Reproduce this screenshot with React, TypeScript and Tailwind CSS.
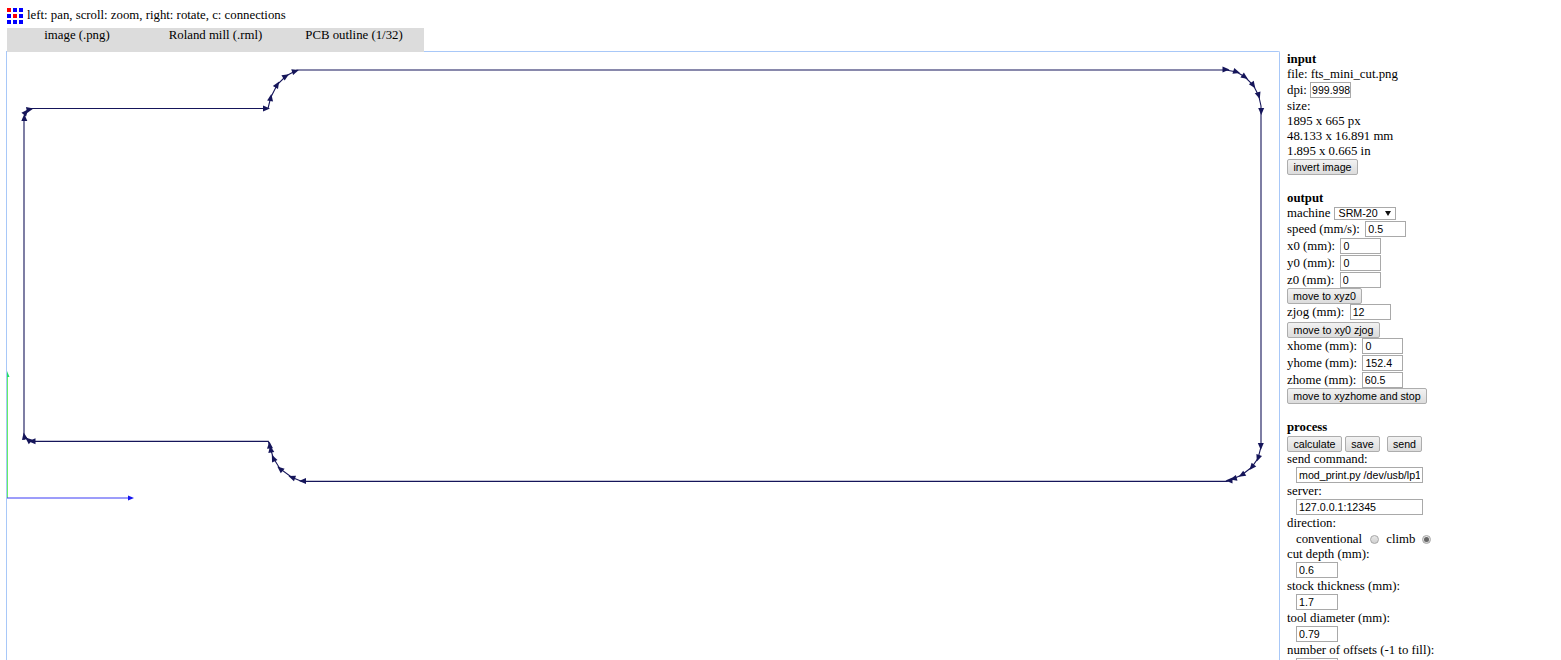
import React from "react";

const NAVY = "#15155a";

type Arrow = [number, number, number];

const arrows: Arrow[] = [
  [24.3, 117.5, -90], [26, 112, -50], [30, 109.3, -12],
  [266.5, 108.4, 0], [270.7, 97.5, -80], [277.3, 84.5, -58], [286, 76, -32], [295.5, 71, -18],
  [1226, 69.6, 0], [1236.7, 72, 18], [1245, 77, 35], [1253.3, 85.3, 55], [1258.7, 95.7, 72], [1261.2, 111.5, 90],
  [1260.8, 446.5, 90], [1258, 458.3, 110], [1251.7, 467.3, 130], [1241.7, 475, 150], [1233.3, 478.7, 165], [1229, 480.5, 180],
  [302.5, 481, 180], [291.7, 477.3, 200], [280, 468.7, 220], [273.3, 458, 245], [270.7, 449, 260], [269.7, 445, 265],
  [32, 441.2, 180], [28, 439.7, 220], [24.3, 436, 260],
];

function Toolpath() {
  return (
    <svg width="1272" height="609" viewBox="7 52 1272 609" className="block">
      <path
        d="M24 440 L24 118 L26 112 L30 108.5 L268 108.5 L270.7 97.5 L277.3 84.5 L286 76 L297 70 L1226 70 L1236.7 72 L1245 77 L1253.3 85.3 L1258.7 95.7 L1261 106 L1261 447 L1258 458.3 L1251.7 467.3 L1241.7 475 L1233.3 478.7 L1227 481.4 L302 481.4 L291.7 477.3 L280 468.7 L273.3 458 L270 447 L268.3 441.4 L32 441.4 L28 439.7 L24 436"
        fill="none"
        stroke={NAVY}
        strokeWidth="1.1"
      />
      {arrows.map(([x, y, a], i) => (
        <polygon key={i} points="-3.5,-3 3.5,0 -3.5,3" fill={NAVY} transform={`translate(${x} ${y}) rotate(${a})`} />
      ))}
      <line x1="7.5" y1="498" x2="7.5" y2="376" stroke="#66ee66" strokeWidth="1" />
      <polygon points="7,371 9.5,377 7,377" fill="#22dd66" />
      <line x1="7" y1="498" x2="130" y2="498" stroke="#3b3bf5" strokeWidth="1" />
      <polygon points="134,498 128,495.5 128,500.5" fill="#1515f0" />
    </svg>
  );
}

function Line({ h = 15, children, className = "" }: { h?: number; children: React.ReactNode; className?: string }) {
  return (
    <div className={`flex items-center whitespace-pre ${className}`} style={{ height: h }}>
      {children}
    </div>
  );
}

function Field({ value, className = "w-[41px] px-[2px] text-[10.67px]" }: { value: string; className?: string }) {
  return (
    <input
      readOnly
      value={value}
      className={`block h-[16px] self-start border border-[#a9a9a9] bg-white font-['Liberation_Sans',Arial,sans-serif] text-black outline-none ${className}`}
    />
  );
}

function Btn({ children, className = "" }: { children: React.ReactNode; className?: string }) {
  return (
    <button
      type="button"
      className={`block h-[16px] rounded-[2px] border border-[#adadad] bg-gradient-to-b from-[#f2f2f2] to-[#dcdcdc] p-0 text-center font-['Liberation_Sans',Arial,sans-serif] text-[10.67px] leading-[14px] text-black ${className}`}
    >
      {children}
    </button>
  );
}

function Labeled({ label, value, h = 17 }: { label: string; value: string; h?: number }) {
  return (
    <Line h={h}>
      <span className="mr-[-1px]">{label}{"\u00a0 "}</span>
      <Field value={value} />
    </Line>
  );
}

function Indented({ value, className }: { value: string; className: string }) {
  return (
    <div className="h-[17px] pl-[9px]">
      <Field value={value} className={`${className} px-[2px] text-[10.67px]`} />
    </div>
  );
}

function Radio({ checked }: { checked?: boolean }) {
  return (
    <span className="flex h-[9px] w-[9px] items-center justify-center rounded-full border border-[#a6a6a6] bg-gradient-to-b from-[#e8e8e8] to-[#d0d0d0]">
      {checked && <span className="h-[5px] w-[5px] rounded-full bg-[#666666]" />}
    </span>
  );
}

function Panel() {
  return (
    <aside className="w-[281px] shrink-0 pl-[7px] pt-[1px]">
      <Line><b>input</b></Line>
      <Line>file: fts_mini_cut.png</Line>
      <Line h={17}>
        <span>dpi: </span>
        <Field value="999.998" className="w-[41px] pl-[1px] pr-0 text-[10.5px]" />
      </Line>
      <Line>size:</Line>
      <Line>1895 x 665 px</Line>
      <Line>48.133 x 16.891 mm</Line>
      <Line>1.895 x 0.665 in</Line>
      <Btn className="w-[71px]">invert image</Btn>

      <Line className="mt-[16px]"><b>output</b></Line>
      <Line>
        <span>machine </span>
        <div className="flex h-[13px] w-[62px] items-center justify-between border border-[#a9a9a9] bg-white pl-[4px] pr-[4px] font-['Liberation_Sans',Arial,sans-serif] text-[10.67px]">
          <span>SRM-20</span>
          <svg width="6" height="5" viewBox="0 0 6 5" className="mb-[1px]">
            <polygon points="0,0 6,0 3,5" fill="#111111" />
          </svg>
        </div>
      </Line>
      <Labeled label="speed (mm/s):" value="0.5" />
      <Labeled label="x0 (mm):" value="0" />
      <Labeled label="y0 (mm):" value="0" />
      <Labeled label="z0 (mm):" value="0" h={16} />
      <Btn className="w-[75px]">move to xyz0</Btn>
      <Labeled label="zjog (mm):" value="12" />
      <Btn className="mt-px w-[93px]">move to xy0 zjog</Btn>
      <Labeled label="xhome (mm):" value="0" />
      <Labeled label="yhome (mm):" value="152.4" />
      <Labeled label="zhome (mm):" value="60.5" h={16} />
      <Btn className="w-[140px]">move to xyzhome and stop</Btn>

      <Line className="mt-[16px]"><b>process</b></Line>
      <div className="mt-px flex h-[16px]">
        <Btn className="w-[55px]">calculate</Btn>
        <Btn className="ml-[3px] w-[35px]">save</Btn>
        <Btn className="ml-[7px] w-[35px]">send</Btn>
      </div>
      <Line>send command:</Line>
      <Indented value="mod_print.py /dev/usb/lp1" className="w-[127px]" />
      <Line>server:</Line>
      <Indented value="127.0.0.1:12345" className="w-[127px]" />
      <Line>direction:</Line>
      <Line h={16} className="pl-[9px]">
        <span>conventional </span>
        <span className="ml-[5px]"><Radio /></span>
        <span className="ml-[7px]">climb </span>
        <span className="ml-[3px]"><Radio checked /></span>
      </Line>
      <Line>cut depth (mm):</Line>
      <Indented value="0.6" className="w-[42px]" />
      <Line>stock thickness (mm):</Line>
      <Indented value="1.7" className="w-[42px]" />
      <Line>tool diameter (mm):</Line>
      <Indented value="0.79" className="w-[42px]" />
      <Line>number of offsets (-1 to fill):</Line>
      <Indented value="1" className="w-[42px]" />
    </aside>
  );
}

export default function App() {
  return (
    <div className="h-[660px] overflow-hidden bg-white font-['Liberation_Serif','Times_New_Roman',serif] text-[12.8px] leading-[15px] text-black">
      <header className="flex h-[28px] items-start pl-[7px] pt-[8px]">
        <svg width="16" height="16" viewBox="0 0 16 16" className="shrink-0">
          <rect x="0" y="0" width="4" height="4" fill="#ff0000" />
          <rect x="6" y="0" width="4" height="4" fill="#0000ff" />
          <rect x="12" y="0" width="4" height="4" fill="#0000ff" />
          <rect x="0" y="6" width="4" height="4" fill="#0000ff" />
          <rect x="6" y="6" width="4" height="4" fill="#ff0000" />
          <rect x="12" y="6" width="4" height="4" fill="#0000ff" />
          <rect x="0" y="12" width="4" height="4" fill="#0000ff" />
          <rect x="6" y="12" width="4" height="4" fill="#0000ff" />
          <rect x="12" y="12" width="4" height="4" fill="#0000ff" />
        </svg>
        <span className="ml-[4px]">left: pan, scroll: zoom, right: rotate, c: connections</span>
      </header>
      <nav className="relative z-10 ml-[7px] grid h-[24px] w-[417px] grid-cols-[140px_137px_140px] bg-[#dcdcdc] text-center">
        <span>image (.png)</span>
        <span>Roland mill (.rml)</span>
        <span>PCB outline (1/32)</span>
      </nav>
      <div className="-mt-px flex">
        <main className="ml-[6px] h-[620px] w-[1274px] shrink-0 rounded-tr-[2px] border-l border-r border-t border-[#a8c8f8]">
          <Toolpath />
        </main>
        <Panel />
      </div>
    </div>
  );
}
